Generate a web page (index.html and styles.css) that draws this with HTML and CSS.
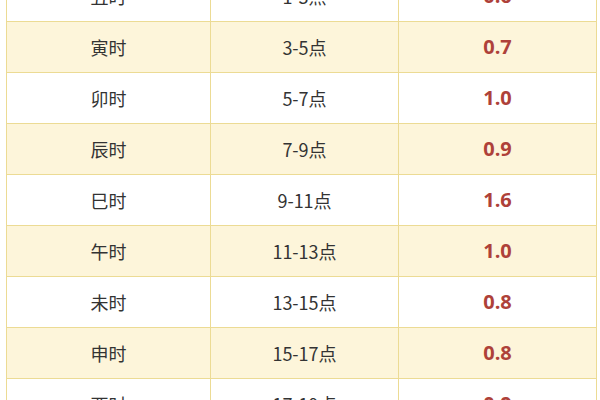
FILE: index.html
```html
<!DOCTYPE html>
<html lang="zh-CN">
<head>
<meta charset="utf-8">
<link rel="stylesheet" href="styles.css">
</head>
<body>
<div class="wrap">
<table class="tbl">
<colgroup><col class="c1"><col class="c2"><col class="c3"></colgroup>
<tbody>
<tr><td>丑时</td><td>1-3点</td><td class="v">0.6</td></tr>
<tr class="alt"><td>寅时</td><td>3-5点</td><td class="v">0.7</td></tr>
<tr><td>卯时</td><td>5-7点</td><td class="v">1.0</td></tr>
<tr class="alt"><td>辰时</td><td>7-9点</td><td class="v">0.9</td></tr>
<tr><td>巳时</td><td>9-11点</td><td class="v">1.6</td></tr>
<tr class="alt"><td>午时</td><td>11-13点</td><td class="v">1.0</td></tr>
<tr><td>未时</td><td>13-15点</td><td class="v">0.8</td></tr>
<tr class="alt"><td>申时</td><td>15-17点</td><td class="v">0.8</td></tr>
<tr><td>酉时</td><td>17-19点</td><td class="v">0.9</td></tr>
</tbody>
</table>
</div>
</body>
</html>
```
FILE: styles.css
```css
html, body {
  margin: 0;
  padding: 0;
  background: #ffffff;
  overflow: hidden;
}
.wrap {
  width: 600px;
  height: 400px;
  overflow: hidden;
  padding-left: 6px;
  box-sizing: border-box;
}
.tbl {
  margin-top: -30px;
  width: 590px;
  table-layout: fixed;
  border-collapse: collapse;
  font-family: "Noto Sans CJK SC", "Noto Sans", sans-serif;
  font-size: 18px;
  color: #333333;
}
.c1 { width: 204px; }
.c2 { width: 188px; }
.c3 { width: 198px; }
.tbl td {
  height: 50px;
  padding: 0;
  border: 1px solid #ecdb94;
  text-align: center;
  vertical-align: middle;
  line-height: 20px;
}
.alt td {
  background: #fdf5da;
}
.tbl td.v {
  color: #ae4139;
  font-weight: bold;
  font-size: 20px;
  font-family: "Open Sans", "Noto Sans", sans-serif;
}
```
